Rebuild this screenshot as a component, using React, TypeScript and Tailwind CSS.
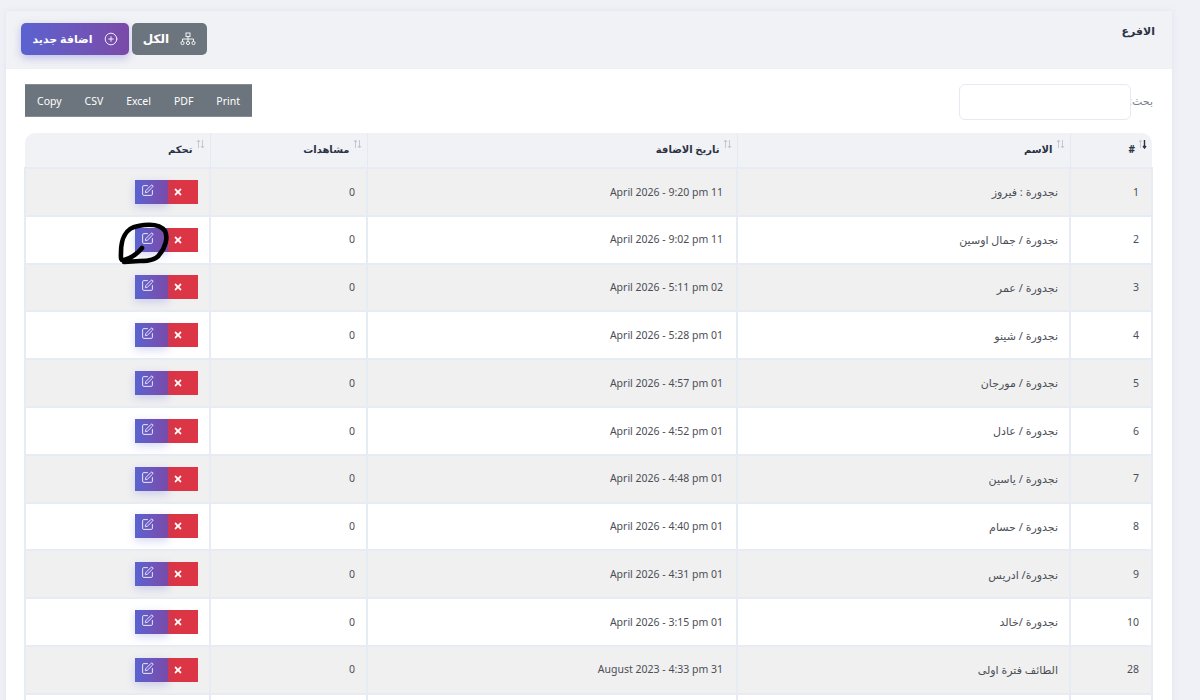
import { CirclePlus, SquarePen } from "lucide-react";
import { FaTimes } from "react-icons/fa";

const rows = [
  ["1", "نجدورة : فيروز", "April 2026 - 9:20 pm 11"],
  ["2", "نجدورة / جمال اوسين", "April 2026 - 9:02 pm 11"],
  ["3", "نجدورة / عمر", "April 2026 - 5:11 pm 02"],
  ["4", "نجدورة / شينو", "April 2026 - 5:28 pm 01"],
  ["5", "نجدورة / مورجان", "April 2026 - 4:57 pm 01"],
  ["6", "نجدورة / عادل", "April 2026 - 4:52 pm 01"],
  ["7", "نجدورة / ياسين", "April 2026 - 4:48 pm 01"],
  ["8", "نجدورة / حسام", "April 2026 - 4:40 pm 01"],
  ["9", "نجدورة/ ادريس", "April 2026 - 4:31 pm 01"],
  ["10", "نجدورة /خالد", "April 2026 - 3:15 pm 01"],
  ["28", "الطائف فترة اولى", "August 2023 - 4:33 pm 31"],
];

function Sort({ active }: { active?: boolean }) {
  return (
    <svg width="9" height="10" viewBox="0 0 9 10" className="absolute top-[-3px] right-[-12px]" fill="none">
      <path d="M2.5 9V1.5M1 3l1.5-2L4 3" stroke="#c3c7ce" strokeWidth="1" />
      <path d="M6.5 1v7.5M5 7l1.5 2L8 7" stroke={active ? "#2c3345" : "#c3c7ce"} strokeWidth={active ? 1.4 : 1} />
    </svg>
  );
}

function Head({ label, w, active, extra }: { label: string; w: string; active?: boolean; extra: string }) {
  return (
    <th className={`${w} ${extra} h-[35px] bg-[#f1f2f5] p-0 pr-[17px] pb-[1px] align-middle text-right font-bold text-[10px] text-[#2c3345]`}>
      <span className="relative inline-block">
        {label}
        <Sort active={active} />
      </span>
    </th>
  );
}

export default function App() {
  return (
    <div dir="rtl" className="h-[700px] overflow-hidden bg-[#f0f1f7] pt-[11px] pr-[28px] pl-[6px] font-['Noto_Sans','DejaVu_Sans',sans-serif] text-[#4b4e55] relative">
      <div className="bg-white shadow-[0_0_6px_rgba(120,130,160,0.12)] h-[800px]">
        <div className="h-[58px] bg-[#f1f2f5] flex justify-between pr-[17px] pl-[15px] pt-[12px] border-b border-[#eef0f5]">
          <h3 className="text-[11px] font-bold text-[#2c3345] leading-[16px]">الافرع</h3>
          <div className="flex flex-row-reverse gap-[3px] h-[32px]">
            <button className="w-[108px] h-[32px] rounded-[5px] flex items-center justify-center gap-[11px] text-white text-[11px] font-bold bg-gradient-to-r from-[#5a62d0] to-[#7a4aa8] shadow-[0_3px_8px_rgba(90,98,208,0.35)]">
              <CirclePlus size={14} strokeWidth={1.5} />
              <span>اضافة جديد</span>
            </button>
            <button className="w-[75px] h-[32px] rounded-[5px] flex items-center justify-center gap-[11px] text-white text-[12px] font-semibold bg-[#6c757d]">
              <svg width="16" height="14" viewBox="0 0 16 14" fill="none" stroke="#fff" strokeWidth="0.9">
                <rect x="6" y="1" width="4" height="3.5" />
                <path d="M8 4.5V7M2.5 9.5V7h11v2.5M8 7v2.5" />
                <circle cx="2.5" cy="11" r="1.6" />
                <circle cx="8" cy="11" r="1.6" />
                <circle cx="13.5" cy="11" r="1.6" />
              </svg>
              <span>الكل</span>
            </button>
          </div>
        </div>
        <div className="px-[19px] pt-[15px]">
          <div className="flex justify-between items-start h-[49px]">
            <label className="flex items-center text-[11px] text-[#7a808c] gap-0">
              <span className="w-[22px] pb-[1px]">بحث:</span>
              <input className="w-[172px] h-[36px] rounded-[6px] border border-[#e6e9f2] bg-white" />
            </label>
            <div dir="ltr" className="flex h-[33px] bg-[#6c757d] text-white text-[10.5px] items-center w-[227px] justify-between px-[12px] pt-[2px] border-y border-[#858d94]">
              <span>Copy</span><span>CSV</span><span>Excel</span><span>PDF</span><span>Print</span>
            </div>
          </div>
          <table className="w-[1127px] table-fixed border-collapse">
            <thead>
              <tr>
                <Head label="#" w="w-[82px]" active extra="rounded-tr-[10px] border-l border-[#e4e9f2]" />
                <Head label="الاسم" w="w-[333px]" extra="border-l border-[#e4e9f2]" />
                <Head label="تاريخ الاضافة" w="w-[370px]" extra="border-l border-[#e4e9f2]" />
                <Head label="مشاهدات" w="w-[157px]" extra="border-l border-[#e4e9f2]" />
                <Head label="تحكم" w="w-[185px]" extra="rounded-tl-[10px]" />
              </tr>
            </thead>
            <tbody>
              {rows.map((r, i) => (
                <tr key={r[0]} className={`h-[47.8px] text-[10.5px] ${i % 2 === 0 ? "bg-[#f0f0f1]" : "bg-white"}`}>
                  <td className="border-2 border-[#e6ebf4] pr-[12px] pt-[1px] text-right p-0">{r[0]}</td>
                  <td className="border-2 border-[#e6ebf4] pr-[11px] pt-[1px] text-right p-0 text-[11px]">{r[1]}</td>
                  <td className="border-2 border-[#e6ebf4] pr-[13px] pt-[1px] text-right p-0"><span dir="ltr">{r[2]}</span></td>
                  <td className="border-2 border-[#e6ebf4] pr-[11px] pt-[1px] text-right p-0">0</td>
                  <td className="border-2 border-[#e6ebf4] pr-[11px] p-0">
                    <div className="flex h-[24px]">
                      <span className="w-[30px] bg-[#dc3545] text-white flex items-center justify-start pr-[15px]"><FaTimes size={10} className="shrink-0" /></span>
                      <span className="w-[33px] bg-gradient-to-r from-[#5a62d0] to-[#7a4aa8] text-white flex items-center justify-end pl-[6px] pb-[3px] shadow-[0_3px_8px_rgba(90,98,208,0.25)]"><SquarePen size={13} strokeWidth={1.6} /></span>
                    </div>
                  </td>
                </tr>
              ))}
              <tr className="h-[47.8px] bg-white">
                <td className="border-2 border-[#e6ebf4]" />
                <td className="border-2 border-[#e6ebf4]" />
                <td className="border-2 border-[#e6ebf4]" />
                <td className="border-2 border-[#e6ebf4]" />
                <td className="border-2 border-[#e6ebf4]" />
              </tr>
            </tbody>
          </table>
        </div>
      </div>
      <svg className="absolute left-[110px] top-[215px]" width="64" height="54" viewBox="0 0 64 54" fill="none">
        <path d="M32 33 C27 39 22 43 14 45 C10 46 11 42 11 37 C11 25 15 13 28 11 C38 9 50 9 55 16 C58 22 56 32 49 40 C46 45 38 46 30 46 L14 47" stroke="#000" strokeWidth="4.6" strokeLinecap="round" strokeLinejoin="round" />
      </svg>
    </div>
  );
}
